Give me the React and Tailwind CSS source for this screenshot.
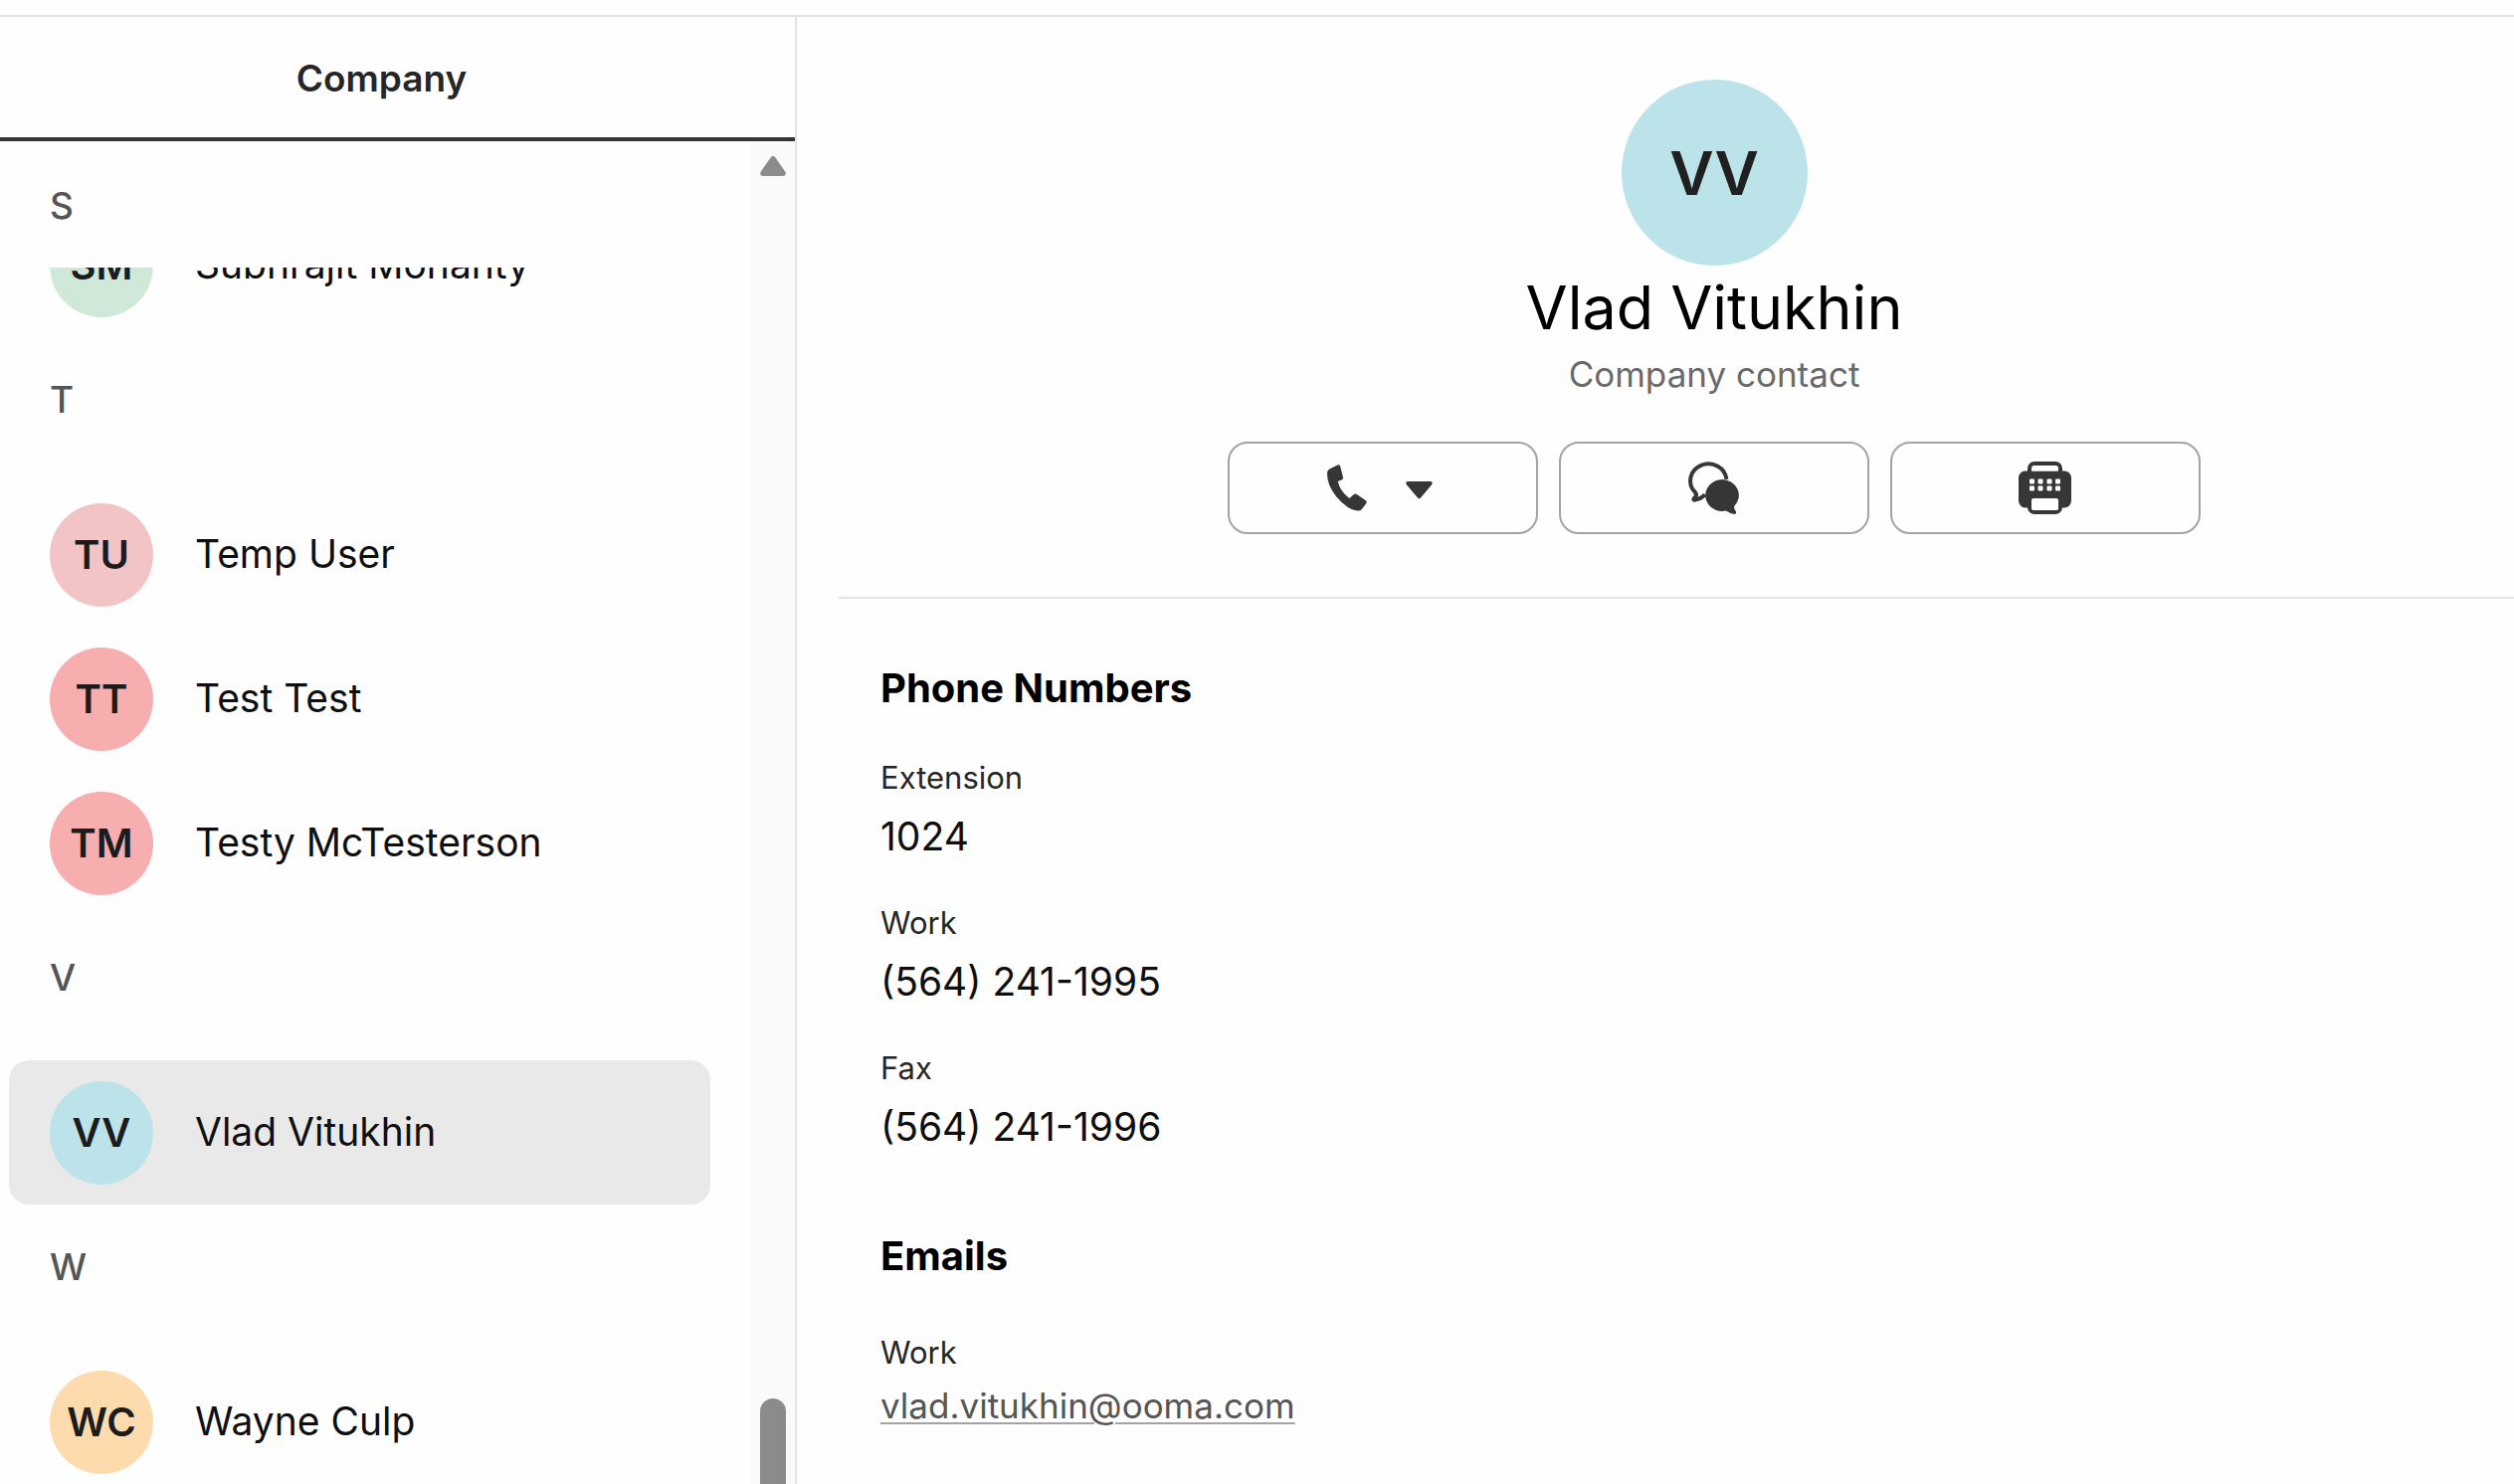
import React from 'react';

const contacts = [
  { letter: 'T', people: [
    { initials: 'TU', name: 'Temp User', color: 'bg-[#f2c4c6]' },
    { initials: 'TT', name: 'Test Test', color: 'bg-[#f7aeae]' },
    { initials: 'TM', name: 'Testy McTesterson', color: 'bg-[#f7aeae]' },
  ] },
  { letter: 'V', people: [
    { initials: 'VV', name: 'Vlad Vitukhin', color: 'bg-[#bbe3e9]', selected: true },
  ] },
  { letter: 'W', people: [
    { initials: 'WC', name: 'Wayne Culp', color: 'bg-[#fedbad]' },
  ] },
];

const phoneNumbers = [
  { label: 'Extension', value: '1024' },
  { label: 'Work', value: '(564) 241-1995' },
  { label: 'Fax', value: '(564) 241-1996' },
];

const SectionLetter = ({ children }) => (
  <h2 className="flex h-[125px] shrink-0 items-center pl-[50px] text-[37px] font-medium text-[#555555]">{children}</h2>
);

const ContactRow = ({ person }) => (
  <button
    type="button"
    className={`ml-[9px] mr-[41px] flex h-[145px] shrink-0 items-center gap-[42px] rounded-[20px] pl-[41px] text-left ${person.selected ? 'bg-[#e9e9e9]' : ''}`}
  >
    <span className={`flex size-[104px] shrink-0 items-center justify-center rounded-full text-[40px] font-semibold text-[#1c1c1c] ${person.color}`}>
      {person.initials}
    </span>
    <span className="whitespace-nowrap text-[39px] text-[#0f0f0f]">{person.name}</span>
  </button>
);

const PhoneIcon = () => (
  <svg viewBox="0 0 40 47" className="h-[47px] w-[40px]" fill="currentColor" aria-hidden="true">
    <path d="M2.4 4.4 L10.6 0.4 Q12.6 -0.2 13.2 1.8 L16 13 Q16.3 14.6 15 15.2 L10.8 17 Q13 27 22.4 34 L26.6 30.2 Q28.1 29 29.8 30 L38.6 36 Q40.3 37.2 39.4 39 L34.6 45.2 Q33.2 46.8 31 46.6 Q20 45.6 9 32 Q-1 19 0.2 7.4 Q0.6 5.4 2.4 4.4 Z" />
  </svg>
);

const CaretIcon = () => (
  <svg viewBox="0 0 27 22" className="h-[22px] w-[27px]" fill="currentColor" aria-hidden="true">
    <path d="M2 4 H25 Q27.6 4.6 26.2 7.2 L15 20.6 Q13.5 22.2 12 20.6 L0.8 7.2 Q-0.6 4.6 2 4 Z" />
  </svg>
);

const ChatIcon = () => (
  <svg viewBox="0 0 53 53" className="size-[53px] overflow-visible" aria-hidden="true">
    <path d="M39.4 18 A18.2 17 0 1 0 8 31 Q9.8 33.2 8.4 35.4 L6.4 37.6 Q6 39.2 8 38.6 Q13.6 37.4 18 33.4" fill="none" stroke="currentColor" strokeWidth="4" />
    <path d="M35 18 A17 16 0 1 0 39 49.6 Q43 52.6 47.4 53 Q50 52.6 48.8 50 Q46.6 47.6 47.2 45 A17 16 0 0 0 35 18 Z" fill="currentColor" />
  </svg>
);

const FaxIcon = () => (
  <svg viewBox="0 0 53 53" className="size-[53px]" aria-hidden="true">
    <rect x="11" y="2" width="31" height="49" rx="5" fill="none" stroke="currentColor" strokeWidth="4" />
    <rect x="0" y="9.5" width="53" height="37" rx="7" fill="currentColor" />
    <path d="M13.5 9.5 V6.5 Q13.5 4.5 15.5 4.5 H37.5 Q39.5 4.5 39.5 6.5 V9.5 Z" fill="white" />
    {[11, 19.5, 28.5, 37].map(x => (
      <g key={x} fill="white">
        <rect x={x} y="17.5" width="5" height="5" rx="1" />
        <rect x={x} y="24.5" width="5" height="5" rx="1" />
      </g>
    ))}
    <rect x="13" y="37" width="27" height="12" rx="2" fill="white" />
  </svg>
);

const ActionButton = ({ label, children }) => (
  <button
    type="button"
    aria-label={label}
    className="flex h-[93px] w-[312px] items-center justify-center rounded-[20px] border-2 border-[#a3a3a3] pr-0.5 text-[#363636]"
  >
    {children}
  </button>
);

const Sidebar = () => (
  <aside className="flex w-[801px] shrink-0 flex-col border-r-2 border-[#e3e3e3]">
    <button type="button" role="tab" aria-selected="true" className="h-[125px] shrink-0 border-b-4 border-[#363636] pr-8 pt-0.5 text-[37px] font-semibold text-[#262626]">
      Company
    </button>
    <div className="flex min-h-0 flex-1">
      <div className="flex min-w-0 flex-1 flex-col overflow-hidden pt-0.5">
        <SectionLetter>S</SectionLetter>
        <div className="flex h-[70px] shrink-0 flex-col justify-end overflow-hidden">
          <ContactRow person={{ initials: 'SM', name: 'Subhrajit Mohanty', color: 'bg-[#cfe8d7]' }} />
        </div>
        {contacts.map(group => (
          <section key={group.letter} className="flex shrink-0 flex-col">
            <div className="pb-[21px]">
              <SectionLetter>{group.letter}</SectionLetter>
            </div>
            {group.people.map(person => (
              <ContactRow key={person.initials} person={person} />
            ))}
          </section>
        ))}
      </div>
      <div className="flex w-11 flex-col items-center justify-between bg-[#fafafa] pt-[15px]">
        <svg viewBox="0 0 26 20" className="h-5 w-[26px]" fill="#8b8b8b" aria-hidden="true">
          <path d="M10.6 1.4 Q13 -1.2 15.4 1.4 L25.2 15.6 Q27 19.4 23.4 20 H2.6 Q-1 19.4 0.8 15.6 Z" />
        </svg>
        <div className="h-[86px] w-[26px] rounded-t-full bg-[#8b8b8b]" />
      </div>
    </div>
  </aside>
);

const ContactDetails = () => (
  <main className="min-w-0 flex-1 overflow-hidden pl-[42px]">
    <header className="flex flex-col items-center border-b-2 border-[#e3e3e3] pb-[63px] pl-[76px] pt-[63px]">
      <div className="flex size-[187px] items-center justify-center rounded-full bg-[#bbe3e9] pt-0.5 text-[61px] font-semibold text-[#202020]">VV</div>
      <h1 className="mt-1.5 text-[61px] leading-[72px] text-black">Vlad Vitukhin</h1>
      <p className="text-[35px] leading-[62px] text-[#6a6a6a]">Company contact</p>
      <div className="mt-[37px] flex gap-[21px]">
        <ActionButton label="Call">
          <span className="flex items-center gap-[39px] pr-[4px]">
            <PhoneIcon />
            <CaretIcon />
          </span>
        </ActionButton>
        <ActionButton label="Message">
          <ChatIcon />
        </ActionButton>
        <ActionButton label="Fax">
          <FaxIcon />
        </ActionButton>
      </div>
    </header>

    <div className="pl-[42px]">
      <h2 className="mt-[65px] text-[40px] font-bold leading-[50px] text-black">Phone Numbers</h2>
      <dl className="mt-[37px] flex flex-col gap-[34px]">
        {phoneNumbers.map(({ label, value }) => (
          <div key={label}>
            <dt className="text-[31px] leading-[56px] text-[#262626]">{label}</dt>
            <dd className="mt-[6px] text-[39px] leading-[50px] text-[#0f0f0f]">{value}</dd>
          </div>
        ))}
      </dl>
      <h2 className="mt-[80px] text-[40px] font-bold leading-[50px] text-black">Emails</h2>
      <dl className="mt-[44px]">
        <dt className="text-[31px] leading-[56px] text-[#262626]">Work</dt>
        <dd className="text-[35px] leading-[50px] text-[#555555]">
          <a href="mailto:vlad.vitukhin@ooma.com" className="underline decoration-[#a3a3a3] decoration-2 underline-offset-4">vlad.vitukhin@ooma.com</a>
        </dd>
      </dl>
    </div>
  </main>
);

const App = () => (
  <div className="flex h-screen flex-col overflow-hidden bg-[#fefefe] pt-[15px] font-['Inter','Liberation_Sans',sans-serif]">
    <div className="flex min-h-0 flex-1 border-t-2 border-[#e3e3e3]">
      <Sidebar />
      <ContactDetails />
    </div>
  </div>
);

export default App;
